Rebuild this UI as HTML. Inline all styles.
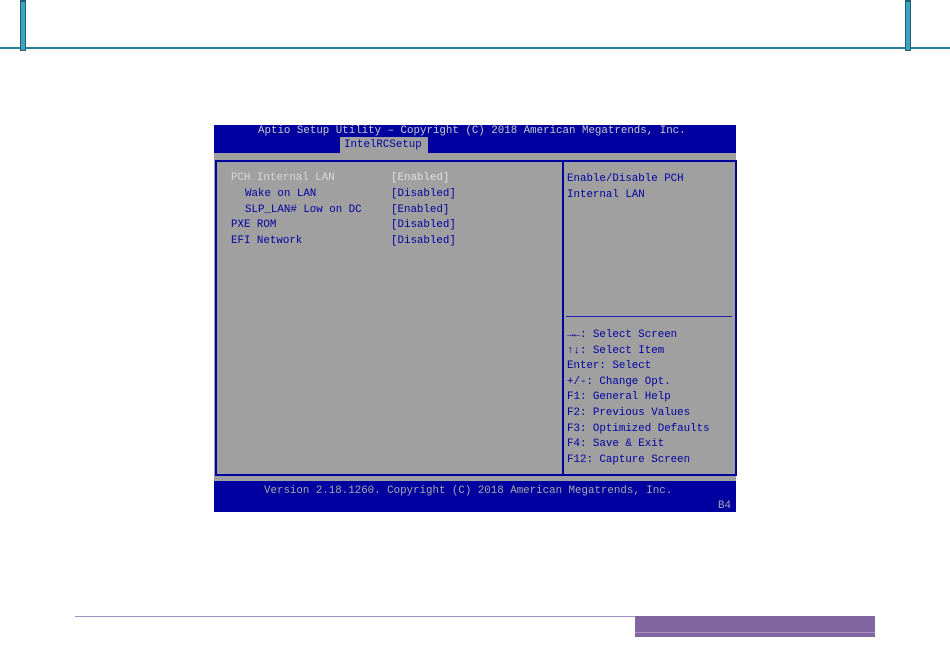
<!DOCTYPE html>
<html><head><meta charset="utf-8"><style>
body{margin:0;width:950px;height:672px;background:#fff;position:relative;overflow:hidden;font-family:"Liberation Mono",monospace;}
.a{position:absolute}
.t{position:absolute;font-size:10.8px;line-height:12px;white-space:pre;}
</style></head><body>
<div class="a" style="left:0;top:47px;width:950px;height:2px;background:#2a7f98"></div>
<div class="a" style="left:20px;top:0;width:4px;height:48px;background:#3fa3c2;border:1px solid #1f5f73;border-top:2px solid #1f5f73"></div>
<div class="a" style="left:905px;top:0;width:4px;height:48px;background:#3fa3c2;border:1px solid #1f5f73;border-top:2px solid #1f5f73"></div>

<div class="a" style="left:75px;top:616px;width:800px;height:1px;background:#a58cc4"></div>
<div class="a" style="left:635px;top:616px;width:240px;height:21px;background:#8065a0"></div>
<div class="a" style="left:635px;top:632px;width:240px;height:1px;background:#a890c0"></div>

<div class="a" style="left:214px;top:125px;width:522px;height:387px;background:#a0a0a0"></div>
<div class="a" style="left:214px;top:125px;width:522px;height:28px;background:#0000a0"></div>
<div class="a" style="left:340px;top:137px;width:88px;height:16px;background:#a0a0a0"></div>
<div class="t" style="left:258px;top:125px;color:#c8c8c8">Aptio Setup Utility – Copyright (C) 2018 American Megatrends, Inc.</div>
<div class="t" style="left:344px;top:139px;color:#0000a0">IntelRCSetup</div>

<div class="a" style="left:215px;top:160px;width:518px;height:312px;border:2px solid #0000a0"></div>
<div class="a" style="left:562px;top:160px;width:2px;height:314px;background:#0000a0"></div>
<div class="a" style="left:566px;top:316px;width:166px;height:1px;background:#2020b0"></div>

<div class="t" style="left:231px;top:172px;color:#d8d8d8">PCH Internal LAN</div>
<div class="t" style="left:391px;top:172px;color:#e0e0e0">[Enabled]</div>
<div class="t" style="left:245px;top:188px;color:#0000a0">Wake on LAN</div>
<div class="t" style="left:391px;top:188px;color:#0000a0">[Disabled]</div>
<div class="t" style="left:245px;top:204px;color:#0000a0">SLP_LAN# Low on DC</div>
<div class="t" style="left:391px;top:204px;color:#0000a0">[Enabled]</div>
<div class="t" style="left:231px;top:219px;color:#0000a0">PXE ROM</div>
<div class="t" style="left:391px;top:219px;color:#0000a0">[Disabled]</div>
<div class="t" style="left:231px;top:235px;color:#0000a0">EFI Network</div>
<div class="t" style="left:391px;top:235px;color:#0000a0">[Disabled]</div>

<div class="t" style="left:567px;top:172px;color:#0000a0;line-height:15.6px">Enable/Disable PCH
Internal LAN</div>
<div class="t" style="left:567px;top:328px;color:#0000a0;line-height:15.6px">→←: Select Screen
↑↓: Select Item
Enter: Select
+/-: Change Opt.
F1: General Help
F2: Previous Values
F3: Optimized Defaults
F4: Save &amp; Exit
F12: Capture Screen</div>

<div class="a" style="left:214px;top:481px;width:522px;height:31px;background:#0000a0"></div>
<div class="t" style="left:264px;top:485px;color:#a8a8a8">Version 2.18.1260. Copyright (C) 2018 American Megatrends, Inc.</div>
<div class="t" style="left:718px;top:500px;color:#a8a8a8">B4</div>
</body></html>
